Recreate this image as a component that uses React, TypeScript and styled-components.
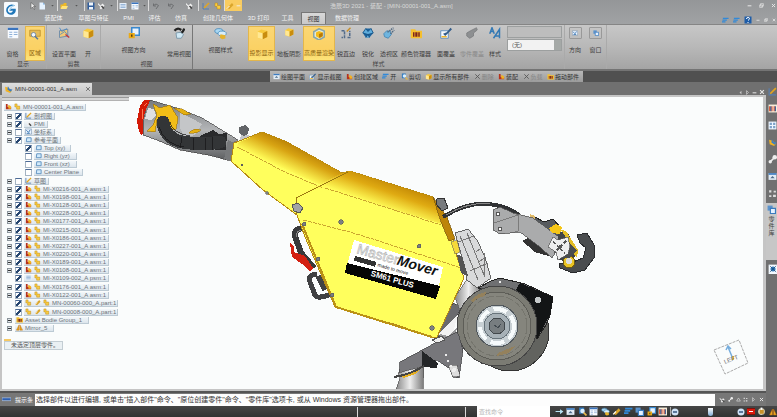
import React from 'react';
import styled, { createGlobalStyle, css } from 'styled-components';

const GlobalStyle = createGlobalStyle`
  * { box-sizing: border-box; }
  body { margin: 0; background: #707070; }
  body, button, input, select { font-family: "Liberation Sans", "Noto Sans CJK SC", sans-serif; font-size: 6px; line-height: 8px; }
  button { border: 0; padding: 0; margin: 0; background: none; color: inherit; white-space: nowrap; }
  svg { display: block; flex: none; }
`;

/* ---------- small icons ---------- */

type IconName =
  | 'cursor' | 'doc' | 'folder' | 'save' | 'tool' | 'list' | 'window' | 'undo' | 'help' | 'region'
  | 'planes' | 'box' | 'clouds' | 'boxRing' | 'edge' | 'sphere' | 'pipe' | 'palette' | 'brush'
  | 'brushOff' | 'font' | 'orient' | 'lock' | 'camera' | 'asm' | 'part' | 'sketch' | 'plane' | 'copy'
  | 'cut' | 'gear' | 'grid' | 'bone' | 'dots' | 'star' | 'arrow' | 'zoom' | 'pan' | 'flag' | 'restore'
  | 'close' | 'minus' | 'mirror' | 'lines' | 'books' | 'caret' | 'tri' | 'bar' | 'clock' | 'left' | 'right' | 'model';

const drawings: Record<IconName, React.ReactNode> = {
  cursor: <path d="M4 1v12l3-3 3 5 2-1-3-5h4z" fill="#eee" stroke="#444" />,
  doc: <><path d="M3 1h7l4 4v10H3z" fill="#e5f2ff" /><path d="M10 1v4h4" fill="#7fb3e6" /></>,
  folder: <><path d="M1 5h5l2-3h5v11H1z" fill="#eeb925" /><path d="M4 8h12l-3 6H1z" fill="#ffe37a" /></>,
  save: <><path d="M1 1h14v14H1z" fill="#315e9c" /><path d="M4 1h8v6H4zM4 10h8v5H4z" fill="#f0f5fa" /></>,
  tool: <><path d="M2 2l5 5 4-4 4 4-7 8-3-3 2-2-5-5z" fill="#f2f2f2" /><path d="M9 8l5 5" stroke="#444" strokeWidth="3" /></>,
  list: <><path d="M1 2h14v12H1z" fill="#e7f0fa" /><path d="M3 5h10M3 8h10M3 11h10" stroke="#4c80bb" /></>,
  window: <><path d="M1 1h14v14H1z" fill="#f8fbff" /><path d="M1 1h14v3H1z" fill="#3a74be" /><path d="M3 7h4M3 10h4M3 13h4M9 7h5M9 10h5" stroke="#6c98cb" /></>,
  undo: <path d="M3 7q5-6 10 0l-5 7M3 3v5h5" fill="none" stroke="#6c6e70" strokeWidth="2" />,
  help: <><path d="M1 1h14v14H1z" fill="#1e5da8" /><path d="M5 6q0-3 3-3t3 2q0 2-3 4M8 12v2" stroke="#fff" strokeWidth="2" fill="none" /></>,
  region: <><path d="M1 3h14v8H1z" fill="#e4bb58" stroke="#b98c28" /><circle cx="6" cy="9" r="3" fill="#eef7ff" stroke="#5a779b" /><path d="M8 11l4 4" stroke="#5a779b" strokeWidth="2" /></>,
  planes: <><path d="M2 5l11-2v9L2 14z" fill="#f1c978" stroke="#537ead" /><path d="M2 1l3 5 7-4M3 10l6-4 4 5" stroke="#3c83c5" fill="none" /><path d="M10 10l5 4" stroke="#c4373c" strokeWidth="2" /></>,
  box: <><path d="M2 5l5-3 8 2v8l-7 3-6-2z" fill="#f7c93c" /><path d="M2 5l7 2v8l-7-2z" fill="#ffe894" /><path d="M9 7l6-3v8l-6 3z" fill="#c98d0f" /></>,
  clouds: <><ellipse cx="6" cy="5" rx="5" ry="3" fill="#a9d7f2" stroke="#448abd" /><ellipse cx="10" cy="8" rx="5" ry="3" fill="#d8eefa" stroke="#448abd" /><path d="M8 9l6 1v4l-4 1-3-2z" fill="#e5b32d" /></>,
  boxRing: <><path d="M1 5l7-4 7 3v8l-7 4-7-4z" fill="#e4e9d5" stroke="#88a5a9" strokeWidth="2" /><path d="M4 6l4-2 5 2v5l-4 3-5-3z" fill="#f4bb18" /><path d="M8 8v5l5-2V6z" fill="#b87907" /></>,
  edge: <><path d="M2 5h4v9H2M10 14h3V5" fill="none" stroke="#526b89" strokeWidth="2" strokeDasharray="4 1" /><path d="M9 6l5-5" stroke="#c78e28" strokeWidth="2" /></>,
  sphere: <><path d="M1 8l4-6h7l3 6-5 6H5z" fill="#1b639e" /><path d="M1 8l4-6 3 4 4-4 3 6-7 2zM5 14l3-4 2 4" fill="#5eacdc" stroke="#124b7c" /></>,
  pipe: <><path d="M1 9l4-4 5 1 1 4-4 5-5-2z" fill="#6eb5df" stroke="#3d7fae" /><path d="M6 7l8-6M10 9l5-5" stroke="#536a80" strokeWidth="2" strokeDasharray="2 1" /></>,
  palette: <><path d="M1 3h6l1 2h8v10H1z" fill="#f5bf2e" /><path d="M4 7h2v6H4zM7 7h3v6H7zM11 7h2v6h-2z" fill="#7d251d" /></>,
  brush: <><path d="M1 5h10v10H1z" fill="#f6fafe" stroke="#477eb6" /><path d="M4 9l5-2 5-6 2 2-6 6-3 3z" fill="#315b89" /><path d="M2 12h7v2H2z" fill="#efb52a" /></>,
  brushOff: <path d="M1 8l5-3 8-4 1 3-5 4v4l-5 3-4-3z" fill="#8d8f91" stroke="#787a7c" />,
  font: <path d="M1 9L4 1l3 8M2 6h4M6 15l8-12v12M8 12h6" stroke="#3479b4" strokeWidth="2" fill="none" />,
  orient: <><path d="M1 2h14v12H1z" fill="#eaf4ff" stroke="#527398" /><path d="M3 5l5 5 4-6M4 12h7" stroke="#2c6bac" strokeWidth="2" fill="none" /></>,
  lock: <><path d="M5 1h10v10H5z" fill="#e8f3ff" stroke="#3988cd" strokeWidth="2" /><path d="M1 8h8v7H1z" fill="#eaaa17" /><path d="M4 10h2v3H4z" fill="#584010" /></>,
  camera: <><path d="M2 5q4-5 9-1M9 9q5-2 6-7" stroke="#222" strokeWidth="3" fill="none" /><path d="M4 8l6-1 4 3-3 5H5z" fill="#d1e9f5" stroke="#6a8ba0" /></>,
  asm: <><path d="M2 2h4v7h8v5H2z" fill="#b6321c" /><path d="M7 5h3l4 3v5H8z" fill="#f3b221" /></>,
  model: <><path d="M2 3l6 2 6 5-3 4-8-3z" fill="#f3b221" /><path d="M7 2l3 5 5 1-3 4-6-4z" fill="#3c7fc4" /></>,
  part: <path d="M2 2h5v5h6v7H6V9H2z" fill="#f9cd42" stroke="#b98412" />,
  sketch: <><path d="M2 2v12h12" stroke="#577fb1" strokeWidth="2" fill="none" /><path d="M4 12l10-10" stroke="#e4a51d" strokeWidth="3" /></>,
  plane: <path d="M4 4h10v9H3z" fill="#d2eafa" stroke="#578dbe" strokeWidth="2" />,
  copy: <><path d="M1 1h9v9H1z" fill="#5c93cc" /><path d="M6 6h9v9H6z" fill="#e4f1ff" stroke="#397abe" strokeWidth="2" /></>,
  cut: <path d="M3 3l10 10M13 3L3 13" stroke="#555" strokeWidth="2" />,
  gear: <><circle cx="8" cy="8" r="6" fill="#d7cfb4" /><path d="M5 5h7v7H5z" fill="#c79128" /><path d="M8 1v4" stroke="#fff" strokeWidth="3" /></>,
  grid: <><path d="M1 1h14v14H1z" fill="#eef6ff" /><path d="M3 3h4v4H3zM9 3h4v4H9zM3 9h4v4H3zM9 9h4v4H9z" fill="#7ea2c8" /></>,
  bone: <><path d="M4 12l8-8" stroke="#eee" strokeWidth="3" /><circle cx="12" cy="4" r="4" fill="#eee" /><circle cx="4" cy="12" r="3" fill="#eee" /></>,
  dots: <path d="M2 2h4v4H2zM10 3h4v3h-4zM2 11h4v3H2zM9 10h5v4H9z" fill="#ddd" />,
  star: <><path d="M1 1h15v15H1z" fill="#f4faff" /><circle cx="8" cy="8" r="4" fill="#2f75b5" /><path d="M3 3l10 10M13 3L3 13" stroke="#17456f" /></>,
  arrow: <path d="M1 7h8V4l6 4-6 5V9H1z" fill="#b7e4f5" />,
  zoom: <><path d="M2 1h9v11H2z" fill="#367dc1" /><circle cx="8" cy="7" r="4" fill="#d8efff" /><path d="M10 10l5 5" stroke="#e8b84b" strokeWidth="3" /></>,
  pan: <><path d="M1 2h14v12H1z" fill="#e2edf7" /><path d="M1 2h14v3H1z" fill="#3d7cc0" /><path d="M4 11l4-4 4 4" fill="#4e6d8b" /></>,
  flag: <><path d="M2 12L12 2l3 4-8 8z" fill="#dba62b" /><path d="M2 13l5-5" stroke="#fff" strokeWidth="2" /></>,
  restore: <path d="M5 2h9v8H5zM2 6h9v8H2z" fill="none" stroke="#e8e8e8" strokeWidth="2" />,
  close: <path d="M3 3l10 10M13 3L3 13" stroke="#e8e8e8" strokeWidth="3" />,
  minus: <path d="M2 9h12" stroke="#eee" strokeWidth="3" />,
  mirror: <path d="M7 2L1 14h6zM9 2l6 12H9z" fill="#eca91e" stroke="#bb6b12" />,
  lines: <path d="M2 3h13M1 7h10M0 11h8" stroke="#3289d8" strokeWidth="3" />,
  books: <><path d="M1 1h15v14H1z" fill="#f6edda" /><path d="M3 4v9M7 4v9M11 4v9" stroke="#d94e2b" strokeWidth="2" /><path d="M5 4v9M13 4v9" stroke="#2b4e8d" strokeWidth="2" /></>,
  caret: <path d="M4 6h8l-4 5z" fill="#555" />,
  tri: <path d="M8 3l6 10H2z" fill="none" stroke="#ddd" strokeWidth="2" />,
  bar: <path d="M0 5h16v5H0z" fill="#2f5fae" stroke="#c2d6f4" />,
  clock: <><circle cx="8" cy="8" r="7" fill="#cfe2f6" /><path d="M4 8h8" stroke="#34567f" strokeWidth="3" /></>,
  left: <path d="M11 2v12L5 8z" fill="#c8c8c8" />,
  right: <path d="M5 2v12l6-6z" fill="none" stroke="#ddd" strokeWidth="2" />,
};

const Icon = ({ name, size = 8 }: { name: IconName; size?: number }) => (
  <svg width={size} height={size} viewBox="0 0 16 16" aria-hidden="true">{drawings[name]}</svg>
);

/* ---------- layout parts ---------- */

const Page = styled.div`display: flex; flex-direction: column; min-height: 100vh; overflow: hidden;`;

const Header = styled.header`display: flex; height: 24px; background: linear-gradient(#949698, #a0a2a4); color: #f2f2f2;`;
const LogoBox = styled.div`width: 22px; padding: 2px 4px;`;
const HeaderBody = styled.div`display: flex; flex: 1; flex-direction: column; justify-content: space-between;`;
const TitleRow = styled.div`display: grid; grid-template-columns: 230px 1fr auto; height: 11px; align-items: center;`;
const QuickBar = styled.div`display: flex; align-items: center; padding-left: 6px; height: 11px;`;
const QuickButton = styled.button<{ $w: number; $hot?: boolean; $sep?: boolean }>`
  display: flex; align-items: center; justify-content: center; height: 11px; width: ${p => p.$w}px;
  background: ${p => (p.$hot ? '#f9cc60' : 'none')};
  border-left: ${p => (p.$sep ? '1px solid #dcdcdc' : '0')};
`;
const WindowTitle = styled.h1`margin: 0 0 0 78px; font-size: 6px; font-weight: 400; line-height: 10px; color: #d9d9d9; white-space: pre;`;
const IconRow = styled.div<{ $gap?: number }>`display: flex; align-items: center; gap: ${p => p.$gap ?? 4}px; padding-right: 1px;`;
const TabRow = styled.nav`display: flex; align-items: flex-end; height: 13px; padding-left: 15px;`;
const RibbonTab = styled.button<{ $w: number; $active?: boolean }>`
  width: ${p => p.$w}px; height: 12px; color: #f4f4f4;
  ${p => p.$active && css`background: linear-gradient(#d9d9d9, #c8c8c8); color: #333; border: 1px solid #777; border-bottom: 0; border-radius: 1px 1px 0 0;`}
`;
const Spring = styled.div`flex: 1;`;

const Ribbon = styled.section`display: flex; height: 47px; color: #444; background: linear-gradient(#c7c7c7, #b8b8b8 50%, #a4a4a4); border-top: 1px solid #858585; border-bottom: 2px solid #747474;`;
const Group = styled.div<{ $w: number; $strong?: boolean }>`
  display: flex; flex-direction: column; flex: none; width: ${p => p.$w}px;
  border-right: 1px solid ${p => (p.$strong ? '#777' : '#aaa')};
`;
const GroupButtons = styled.div`display: flex; height: 35px; padding-top: 1px;`;
const Caption = styled.div`text-align: center; line-height: 8px;`;
const RibbonButton = styled.button<{ $w: number; $hot?: boolean; $high?: boolean; $dim?: boolean }>`
  display: flex; flex: none; flex-direction: column; align-items: center; justify-content: space-between;
  width: ${p => p.$w}px; height: 35px; padding: ${p => (p.$high ? '1px 0 7px' : '1px 0 3px')};
  color: ${p => (p.$dim ? '#8a8a8a' : '#3c3c3c')};
  ${p => p.$hot && css`background: linear-gradient(#fbd774, #fbd163 70%, #fde47a); border: 1px solid #e3b64b; color: #8a6412;`}
`;
const IconFrame = styled.span<{ $on?: boolean }>`
  display: flex; align-items: center; justify-content: center;
  ${p => p.$on && css`width: 13px; height: 12px; border: 1px solid #999; border-radius: 1px;`}
`;
const Combos = styled.div`display: flex; flex-direction: column; gap: 1px; width: 57px; margin-left: auto;`;
const Combo = styled.select<{ $light?: boolean }>`
  appearance: none; width: 55px; height: 12px; padding: 0 4px; border: 1px solid #9c9f9f; border-radius: 0;
  color: #555; background: ${p => (p.$light ? 'linear-gradient(90deg, #f2f2f2 86%, #a5a9a7 86%)' : '#bdbdbd')};
`;

const ContextStrip = styled.div`display: flex; height: 11px; background: #505050; padding-left: 270px;`;
const ContextBar = styled.div`display: flex; align-items: center; height: 11px; width: 313px; justify-content: space-between; padding: 0 4px 0 3px; background: linear-gradient(#b7b7b7, #9c9c9c); color: #333;`;
const ContextButton = styled.button<{ $dim?: boolean }>`display: flex; align-items: center; gap: 1px; color: ${p => (p.$dim ? '#858585' : '#333')};`;

const Middle = styled.div`display: flex; flex: 1;`;
const Main = styled.main`display: flex; flex: 1; min-width: 0; flex-direction: column;`;
const DocTabs = styled.div`display: flex; align-items: flex-end; justify-content: space-between; height: 13px; background: #707070; padding-left: 2px;`;
const DocTab = styled.button`display: flex; align-items: center; gap: 2px; height: 12px; width: 90px; padding: 0 1px 0 2px; background: linear-gradient(#dedede, #c6c6c6); color: #333;`;
const DocName = styled.span`flex: 1; text-align: left;`;

const Viewport = styled.section`display: flex; flex: 1; position: relative; overflow: hidden; background: #fafcfc; border: 2px solid #c5c5c5; border-right-width: 3px;`;
const TreePane = styled.aside`width: 128px; flex: none;`;
const PaneHandle = styled.div`height: 4px; margin-bottom: 2px; width: 127px; background: #d4d4d4; border-top: 1px solid #999; border-bottom: 1px solid #b2b2b2;`;
const TreeGroup = styled.ul`list-style: none; margin: 0 0 1px; padding: 0 0 0 2px;`;
const TreeRow = styled.li<{ $indent: number }>`display: flex; align-items: center; height: 8px; padding-left: ${p => p.$indent}px;`;
const Expander = styled.button`
  flex: none; width: 5px; height: 5px; margin: 0 3px; background: #e4e9ec; border: 1px solid #8c959c;
  &::after { content: ""; display: block; width: 3px; height: 1px; background: #333; }
`;
const ExpanderGap = styled.span<{ $w: number }>`flex: none; width: ${p => p.$w}px;`;
const Tick = styled.input`
  appearance: none; flex: none; width: 7px; height: 7px; margin: 0 2px 0 0; border: 1px solid #a4b3c2; border-top-color: #4d6b96; background: #fff;
  &:checked { background: linear-gradient(135deg, #fff 35%, #25456f 36% 62%, #fff 63%); }
`;
const TreeLabel = styled.label<{ $w?: number }>`
  display: flex; align-items: center; gap: 2px; height: 7px; padding: 0 2px 0 1px; width: ${p => (p.$w ? p.$w + 'px' : 'auto')};
  white-space: nowrap; color: #6d747a; background: linear-gradient(#f3f7fa, #dce5ec); border-bottom: 1px solid #bccad4; border-right: 1px solid #bccad4;
`;
const HintBlock = styled.div`
  margin: 7px 0 0 2px;
  &::before { content: ""; display: block; width: 7px; height: 2px; background: #f6c964; }
`;
const Hint = styled.div`
  width: fit-content; height: 9px; padding: 0 3px 0 6px; line-height: 7px; color: #555;
  background: #eaf0f3; border: 1px solid #c3cdd3;
`;
const Drawing = styled.svg`display: block; width: 470px; height: 292px;`;
const CubeBox = styled.div`position: absolute; right: 14px; bottom: 14px;`;

const Status = styled.footer`display: flex; align-items: center; height: 15px; border-top: 2px solid #555; background: #777;`;
const StatusTitle = styled.label`display: flex; align-items: center; gap: 4px; width: 35px; padding-left: 2px; color: #fff;`;
const StatusField = styled.input`flex: 1; min-width: 0; height: 12px; padding: 0 1px; border: 0; background: #fdfdfd; color: #333; font-size: 7px; line-height: 12px;`;
const StatusTools = styled.div`display: flex; align-items: center; justify-content: space-between; width: 51px; padding: 0 2px 0 4px;`;

const SideBar = styled.aside`display: flex; flex: none; flex-direction: column; align-items: center; width: 11px; padding-top: 1px; background: #707070; overflow: hidden;`;
const SideButton = styled.button`display: flex; flex: none; align-items: center; justify-content: center; height: 17px; width: 11px; padding-left: 2px;`;
const SideTab = styled.button`
  display: flex; flex-direction: column; flex: none; align-items: center; gap: 2px; width: 11px; height: 57px; padding-top: 2px; margin: 1px 0 0;
  background: #c7c7c7; color: #444; white-space: normal; line-height: 7px;
`;
const VerticalText = styled.span`width: 6px;`;

const BottomBar = styled.div`display: flex; height: 11px; align-items: center; background: linear-gradient(#464646, #303332);`;
const BottomSegment = styled.div<{ $grow: number }>`flex: ${p => p.$grow} 1 0; height: 10px; border-right: 1px solid #d8d8d8;`;
const FindField = styled.input`width: 73px; height: 11px; margin-left: 11px; padding: 0 2px; border: 0; background: #fff; color: #999; &::placeholder { color: #b5b5b5; opacity: 1; }`;
const BottomTools = styled.div`display: flex; align-items: center; justify-content: space-between; width: 227px; padding-left: 5px;`;
const ToolButton = styled.button`display: flex;`;
const ZoomTrack = styled.div`display: flex; width: 75px; align-items: center; justify-content: space-between; border-left: 1px solid #aaa;`;
const Slider = styled.input`
  appearance: none; width: 56px; height: 9px; margin: 0; background: transparent;
  &::-webkit-slider-thumb { appearance: none; width: 5px; height: 8px; background: linear-gradient(#fff, #7facd4); border-radius: 0 0 3px 3px; }
`;
const Record = styled.span`display: block; width: 8px; height: 7px; background: #d9190c; border: 1px solid #7a120c; border-width: 1px 0;
  &::after { content: ""; display: block; margin: 2px auto; width: 4px; height: 1px; background: #fff; }
`;

/* ---------- data ---------- */

const quick: [IconName, number, boolean?, boolean?][] = [
  ['cursor', 9], ['doc', 10], ['caret', 10], ['folder', 12, false, true], ['caret', 15], ['save', 12, false, true], ['tool', 9], ['caret', 12],
  ['list', 11, false, true], ['window', 13], ['caret', 7], ['undo', 14, false, true], ['undo', 17], ['tool', 19], ['sketch', 14, false, true], ['part', 12], ['flag', 11, true, true], ['minus', 7, true],
];
const tabs: [string, number][] = [
  ['装配体', 33], ['草图与特征', 47], ['PMI', 23], ['评估', 29], ['仿真', 24], ['创建几何体', 50], ['3D 打印', 31], ['工具', 27], ['视图', 25], ['数据管理', 42],
];

type Row = { text: string; indent?: number; ticked?: boolean; open?: boolean; icons: IconName[]; w?: number; root?: boolean };
const asmRow = (n: string, suffix = '001_A asm:1'): Row => ({ text: `MI-X${n}-${suffix}`, ticked: true, open: true, icons: ['asm', 'part'], w: 85 });
const tree: Row[][] = [
  [{ text: 'MN-00001-001_A.asm', icons: ['asm', 'part'], root: true }],
  [
    { text: '剖视图', ticked: true, open: true, icons: ['sketch'] },
    { text: 'PMI', ticked: true, open: true, icons: ['tool'] },
    { text: '坐标系', ticked: false, open: true, icons: ['orient'] },
    { text: '参考平面', ticked: true, open: true, icons: ['plane'] },
    { text: 'Top (xy)', indent: 10, ticked: true, icons: ['plane'], w: 37 },
    { text: 'Right (yz)', indent: 10, ticked: false, icons: ['plane'], w: 43 },
    { text: 'Front (xz)', indent: 10, ticked: false, icons: ['plane'], w: 43 },
    { text: 'Center Plane', indent: 10, ticked: false, icons: ['plane'], w: 49 },
  ],
  [{ text: '草图', ticked: false, open: true, icons: ['sketch'] }, asmRow('0216'), asmRow('0198'), asmRow('0128'), asmRow('0228'), asmRow('0177')],
  [asmRow('0215'), asmRow('0186'), asmRow('0227'), asmRow('0220'), asmRow('0189'), asmRow('0108'),
    { text: 'MI-X0109-002_A psm:1', ticked: true, icons: ['list', 'part'], w: 85 }],
  [asmRow('0176'), asmRow('0122'), { text: 'MN-00060-000_A.part:1', ticked: true, icons: ['part', 'flag', 'part'], w: 94 }],
  [
    { text: 'MN-00008-000_A.part:1', ticked: true, icons: ['part', 'flag', 'part'], w: 94 },
    { text: 'Asset Bodie Group_1', open: true, icons: ['palette'], w: 74 },
    { text: 'Mirror_5', open: true, icons: ['mirror'], w: 39 },
  ],
];

const context: [IconName, string, boolean?][] = [
  ['pan', '绘图平面'], ['brush', '显示截图'], ['asm', '创建区域'], ['lines', '开'], ['zoom', '剪切'],
  ['box', '显示所有部件'], ['cut', '删除', true], ['asm', '装配'], ['cut', '负载', true], ['palette', '拖动部件'],
];

/* ---------- drawings ---------- */

const Logo = () => (
  <svg width="14" height="15" viewBox="0 0 42 45" role="img" aria-label="浩辰3D">
    <rect width="42" height="45" rx="4" fill="#f7fbff" />
    <path d="M33 10Q17 3 9 16c-7 12 2 25 15 22 9-2 13-11 11-18H21l-4 6h10c-2 7-13 9-15 1-3-10 10-17 21-17z" fill="#2178ba" />
    <path d="M33 10Q16 15 17 27" stroke="#65b1df" strokeWidth="2" fill="none" />
  </svg>
);

const Tug = () => (
  <Drawing viewBox="130 97 470 292" role="img" aria-label="MasterMover" shapeRendering="crispEdges">
    <defs>
      <linearGradient id="neck" gradientUnits="userSpaceOnUse" x1="300" y1="148" x2="289" y2="171">
        <stop offset="0" stopColor="#bd8507" /><stop offset=".35" stopColor="#d8a413" /><stop offset="1" stopColor="#fffb57" />
      </linearGradient>
      <linearGradient id="hood" gradientUnits="userSpaceOnUse" x1="392" y1="182" x2="383" y2="207">
        <stop offset="0" stopColor="#c58b06" /><stop offset=".4" stopColor="#dfaa12" /><stop offset="1" stopColor="#fffb57" />
      </linearGradient>
      <linearGradient id="steel"><stop offset="0" stopColor="#888" /><stop offset=".5" stopColor="#eee" /><stop offset="1" stopColor="#777" /></linearGradient>
      <linearGradient id="arm" x2="0" y2="1"><stop offset="0" stopColor="#777a7d" /><stop offset=".5" stopColor="#b4b6b8" /><stop offset="1" stopColor="#595b5d" /></linearGradient>
    </defs>

    {/* handle */}
    <path d="M150 100L180 109 202 118 230 135 238 140 234 143 231 161 208 155 180 150 157 140 143 135V122L146 108z" fill="url(#arm)" stroke="#444" strokeWidth=".7" />
    <path d="M148 108l6 1 2 7-5 4-6-1z" fill="#dfe0e3" />
    <path d="M180 112l22 12-7 11-10 2-5-9z" fill="#c4c6c8" />
    <path d="M200 136l13-6 6 4 8-1-1 17-22-1z" fill="#292a2c" />
    <path d="M153 104l7 4 10-3 8 13-2 11-7 2 1-9-7-6-6 4-2 12-8-1 6-6 4-10z" fill="#f2bd17" stroke="#a77b0b" strokeWidth=".7" />
    <path d="M174 108l8 1 9 5-7 1zM189 133q5-6 12-3-4 4-12 3z" fill="#e4af11" stroke="#926b0a" strokeWidth=".5" />
    <path d="M163 122c0 9 8 18 19 20 14 2 24 3 38 0" stroke="#333537" strokeWidth="13" fill="none" strokeLinecap="round" />
    <path d="M159 127c5 13 13 18 25 20M170 122c1 8 9 12 20 14M182 137l-2 11M194 138l-1 12M205 138v12M212 137v13" stroke="#151617" strokeWidth=".7" fill="none" />
    <path d="M232 142l6-2-7 21-7-2 4-19z" fill="#77797b" />
    <path d="M144 100h6l-5 12-2 10v12l-2 1-3-7-1-8 3-14z" fill="#d31b08" />
    <path d="M147 103l-3 3M142 109v10" stroke="#ff7750" />
    <path d="M242 134l7 1v4l-10 2z" fill="#c5c7c9" /><path d="M239 127l6-2 4 3-1 6-4 2-5-3z" fill="#626568" />

    {/* lifting gear left of the hood */}
    <path d="M304 228q-11 1-9 8l6 17 13 15" fill="none" stroke="#38393b" strokeWidth="6" />
    <path d="M301 230q-6 2-4 7" stroke="#888" fill="none" />
    <path d="M317 274q-10 1-7 8l5 13q2 5 19-2M318 276l7 14" fill="none" stroke="#404143" strokeWidth="5" />
    <path d="M290 243l4 4v5l11 4 8 12-3 4-8-8-10-7z" fill="#d32112" />

    {/* linkage behind the body */}
    <path d="M453 303l9 4-15 26-12 5 5-15z" fill="#6a6a6e" stroke="#333" strokeWidth=".7" />
    <path d="M450 322l8-7-6 20-10 3-3-4z" fill="#f2f2f2" /><path d="M440 334l8 2 9-8-3 13-17 3z" fill="#99999b" />
    <path d="M455 297l12-18 15 12-22 20z" fill="url(#steel)" stroke="#555" strokeWidth=".7" />

    {/* yellow body */}
    <path d="M234 143L262 132 287 142 342 173 350 171 433 197 453 238 457 257 464 278 437 337H431L397 325 372 318 335 307 305 237 297 215 263 190 231 161z" fill="#ffff5d" stroke="#b68a13" />
    <path d="M238 143L262 132 287 142 342 173 321 185 237 148z" fill="url(#neck)" />
    <path d="M342 173l8-2 83 26 9 27-119-36-20 5z" fill="url(#hood)" />
    <path d="M433 197l14 20 8 22-6 2-8-19z" fill="#bd8509" stroke="#7c580c" strokeWidth=".7" />
    <path d="M296 198l52-26M296 198l1 16" stroke="#9c7810" fill="none" />
    <path d="M237 147l48 25 38 16M325 188l116 37M303 220l47 12 32 10 79 26" stroke="#bd8e24" strokeWidth=".8" strokeDasharray="4 1" fill="none" />
    <path d="M302 224l34 83 96 30" stroke="#bb9115" strokeWidth="2" fill="none" />
    <path d="M292 205l6-2 5 5-3 5-6-2z" fill="#a2a4a6" stroke="#555" />
    <path d="M437 199l7-1 4 10-6 3-6-7z" fill="#777a7d" stroke="#333" />
    <g fill="#7c7f82" stroke="#555" strokeWidth=".6">
      <circle cx="341" cy="222" r="2.4" /><circle cx="419" cy="246" r="2" /><circle cx="304" cy="224" r="2" /><circle cx="318" cy="259" r="2" />
      <circle cx="332" cy="295" r="2" /><circle cx="432" cy="328" r="2.4" /><circle cx="267" cy="193" r="1.5" /><circle cx="242" cy="165" r="1" />
    </g>

    {/* name plate */}
    <path d="M354 240l89 27-7 32-91-26z" fill="#fff" /><path d="M347 263l93 23-4 13-91-26z" fill="#050505" />
    <g transform="translate(356 253) rotate(16)" fontFamily="Liberation Sans, sans-serif">
      <text fontSize="14" fill="#f4f4f4" stroke="#aaa" strokeWidth=".5">Master</text>
      <text x="42" fontSize="14" fontWeight="700" fontStyle="italic" fill="#111">Mover</text>
      <text x="24" y="7" fontSize="5" fill="#222">made to move</text>
      <path d="M0 3h22v5H0z" fill="#333" />
      <text x="20" y="18" fontSize="8" fontWeight="700" fill="#fff">SM61 PLUS</text>
    </g>

    {/* cable and drive unit */}
    <path d="M443 217q24-15 44-13 18 1 32 11" fill="none" stroke="#303234" strokeWidth="4" /><path d="M446 215q24-14 44-11" stroke="#888" fill="none" />
    <path d="M455 233l13-4 9 11 8 17 6 21-14 10-10-8-5-23z" fill="#d9dadb" stroke="#444" strokeWidth=".8" />
    <path d="M460 236l18 44M467 233l17 42M458 242l16-6M476 252l5-4M478 262l7-4M470 271l18-8M484 253v24" stroke="#777" fill="none" />
    <path d="M451 242l6-2 3 12-5 2z" fill="#f4d83a" stroke="#555" strokeWidth=".5" /><path d="M457 255l5 1 6 20-7-3z" fill="#555" />

    {/* front bracket and hook */}
    <path d="M522 241l6-3 15 10 6 8-15-4-6-6z" fill="#333" />
    <path d="M530 215l5 2 9 5 9-3 8 9-5 12-26-14z" fill="#565a5e" stroke="#222" /><path d="M530 214l5 2v8l-5-3z" fill="#e0bb68" />
    <path d="M493 210l7-3 13 6 20 5 30 22-11 18-12-11-20-15-20 2-7-4z" fill="#aaabac" stroke="#555" strokeWidth=".8" />
    <path d="M513 213l6 2-1 16-7 2M493 223l7-2 18-6" fill="none" stroke="#666" strokeWidth=".7" />
    <circle cx="498" cy="214" r="2" fill="#fff" stroke="#555" /><circle cx="500" cy="229" r="2" fill="#fff" stroke="#555" />
    <path d="M558 231l10 2 10 20-8 10-13-4z" fill="#414446" /><path d="M549 228l7-4 6 3-2 7-8-1z" fill="#f5c618" />
    <path d="M561 230l5 1 12 19-1 8-4-5-3-9z" fill="#e4bd24" />
    <path d="M577 235l10-2 7 12v13l-9 12-12 3-13-5-1-4 14-2 10-4 3-10-6-5z" fill="#4a4d4f" stroke="#292b2d" />
    <circle cx="569" cy="262" r="6" fill="#eac423" stroke="#715b12" /><circle cx="569" cy="261" r="3" fill="#ddd" />
    <path d="M556 258l14-14 7 6-8 8z" fill="#4a4d4f" />
    <path d="M548 247l5-10 5 3 10-3 2 9-2 8-10 6-2-8z" fill="#eee" stroke="#555" strokeWidth=".7" />
    <path d="M553 242l12 11M566 241l-12 12" stroke="#555" strokeWidth="1.5" strokeDasharray="3 2" /><circle cx="560" cy="247" r="2" fill="#555" />

    {/* wheels */}
    <ellipse cx="510" cy="332" rx="39" ry="39" fill="#62635f" stroke="#333" />
    <path d="M478 288l13-7 9-3 25 6 28 13-3 18-4 10-9 14-5-22-20-24z" fill="#6f7072" stroke="#222" />
    <path d="M520 283l33 14-3 18-5 9-8 15-4-22-18-26z" fill="#131516" /><circle cx="538" cy="300" r="3" fill="#c5c9ca" /><circle cx="500" cy="282" r="1.5" fill="#eee" />
    <circle cx="497" cy="326" r="40" fill="#7b7b73" stroke="#444" strokeWidth="1" />
    <circle cx="497" cy="326" r="34" fill="#85857d" stroke="#5d5d57" /><circle cx="497" cy="326" r="30" fill="none" stroke="#75756d" strokeDasharray="8 2" />
    <path d="M471 300q7-7 15-8l-1 4q-8 1-12 7zM498 353l17-7-6 7-12 3z" fill="#94815c" />
    <circle cx="497" cy="326" r="21" fill="#c8d0d4" stroke="#51585d" /><circle cx="497" cy="326" r="17" fill="none" stroke="#f7fbfc" strokeWidth="4" strokeDasharray="14 5" />
    <circle cx="497" cy="326" r="13" fill="#a7b1b7" stroke="#68747b" /><circle cx="497" cy="326" r="8" fill="#777d80" stroke="#42484c" />
    <path d="M494 325l4 3 3-4" stroke="#424a50" fill="none" />

    {/* swing plate and castor */}
    <path d="M457 332l-20 10-37 20-1 15 38-17 13 9 3 8 6 1 4-28-4-14z" fill="#77777b" stroke="#48484b" strokeWidth=".8" />
    <path d="M422 351l16 12-1 5-15-1z" fill="#242628" />
    <path d="M437 343l-5-3 10-4 3 4z" fill="#eee" stroke="#555" />
    <path d="M448 365l5 12 7-1-3-11z" fill="#ddd" stroke="#555" strokeWidth=".6" />
    <g fill="#eee"><circle cx="446" cy="355" r="1.5" /><circle cx="448" cy="361" r="1.5" /><circle cx="451" cy="366" r="1.5" /><circle cx="454" cy="370" r="2" /></g>
    <path d="M398 373l26-7-1 24h-27l4-12z" fill="url(#steel)" stroke="#555" strokeWidth=".7" />
    <path d="M401 375l19-6-5 5-12 4z" fill="#e4ae21" /><path d="M394 377q15-2 30-11" stroke="#444" strokeWidth="2" fill="none" />
  </Drawing>
);

const Cube = () => (
  <svg width="36" height="36" viewBox="0 0 36 36" role="img" aria-label="LEFT">
    <path d="M1 11L26 1 35 24 12 35z" fill="none" stroke="#aaa" strokeDasharray="3 1" />
    <path d="M15 8l5 12M13 11l2-4 3 3" stroke="#76addd" strokeWidth="1.5" fill="none" /><path d="M20 17v4" stroke="#ddb04c" strokeWidth="2" />
    <text transform="translate(12 25) rotate(-22)" fontFamily="Liberation Sans, sans-serif" fontSize="6" fill="#666">LEFT</text>
  </svg>
);

/* ---------- composed pieces ---------- */

type ToolProps = { icon: IconName; text: string; w: number; hot?: boolean; high?: boolean; dim?: boolean; framed?: boolean; size?: number };
const Tool = ({ icon, text, w, hot, high, dim, framed, size = 12 }: ToolProps) => (
  <RibbonButton $w={w} $hot={hot} $high={high} $dim={dim}>
    <IconFrame $on={framed}><Icon name={icon} size={size} /></IconFrame><span>{text}</span>
  </RibbonButton>
);

const TreeItem = ({ row, id }: { row: Row; id: string }) => (
  <TreeRow $indent={row.indent ?? 0}>
    {!row.root && (row.open ? <Expander aria-label="展开" /> : <ExpanderGap $w={11} />)}
    {!row.root && row.ticked !== undefined && <Tick type="checkbox" id={id} defaultChecked={row.ticked} />}
    <TreeLabel htmlFor={row.ticked !== undefined ? id : undefined} $w={row.w}>
      {row.icons.map((name, i) => <Icon key={i} name={name} size={7} />)}{row.text}
    </TreeLabel>
  </TreeRow>
);

export default function App() {
  return (
    <Page>
      <GlobalStyle />
      <Header>
        <LogoBox><Logo /></LogoBox>
        <HeaderBody>
          <TitleRow>
            <QuickBar>
              {quick.map(([name, w, hot, sep], i) => (
                <QuickButton key={i} $w={w} $hot={hot} $sep={sep} aria-label={name}><Icon name={name} size={name === 'caret' || name === 'minus' ? 5 : 8} /></QuickButton>
              ))}
            </QuickBar>
            <WindowTitle>浩辰3D 2021 - 装配 - [MIN-00001-001_A.asm]</WindowTitle>
            <IconRow $gap={7}><Icon name="minus" size={5} /><Icon name="restore" size={5} /><Icon name="close" size={5} /></IconRow>
          </TitleRow>
          <TabRow>
            {tabs.map(([text, w]) => <RibbonTab key={text} $w={w} $active={text === '视图'}>{text}</RibbonTab>)}
            <Spring />
            <IconRow $gap={4}>
              <Icon name="lines" size={7} /><Icon name="lines" size={7} /><Icon name="help" size={8} /><Icon name="minus" size={4} /><Icon name="restore" size={4} /><Icon name="close" size={4} />
            </IconRow>
          </TabRow>
        </HeaderBody>
      </Header>

      <Ribbon>
        <Group $w={47}>
          <GroupButtons><Tool icon="window" text="窗格" w={25} /><Tool icon="region" text="区域" w={20} hot /></GroupButtons>
          <Caption>显示</Caption>
        </Group>
        <Group $w={54}>
          <GroupButtons><Tool icon="planes" text="设置平面" w={34} /><Tool icon="box" text="开" w={14} /></GroupButtons>
          <Caption>剪裁</Caption>
        </Group>
        <Group $w={92} $strong>
          <GroupButtons><Tool icon="lock" text="视图方向" w={65} high /><Tool icon="camera" text="常用视图" w={26} /></GroupButtons>
          <Caption>视图</Caption>
        </Group>
        <Group $w={372}>
          <GroupButtons>
            <Tool icon="clouds" text="视图样式" w={55} high size={13} />
            <Tool icon="box" text="投影显示" w={27} hot /><Tool icon="box" text="地板阴影" w={28} size={10} />
            <Tool icon="boxRing" text="高质量渲染" w={32} hot /><Tool icon="edge" text="锐直边" w={22} /><Tool icon="sphere" text="锐化" w={22} />
            <Tool icon="pipe" text="透视区" w={20} /><Tool icon="palette" text="颜色管理器" w={34} /><Tool icon="brush" text="面覆盖" w={26} />
            <Tool icon="brushOff" text="零件覆盖" w={26} dim /><Tool icon="font" text="样式" w={20} />
            <Combos>
              <Combo aria-label="样式名称" defaultValue=""><option value=""></option></Combo>
              <Combo aria-label="面样式" $light><option>(无)</option></Combo>
            </Combos>
          </GroupButtons>
          <Caption>样式</Caption>
        </Group>
        <Group $w={42}>
          <GroupButtons><Tool icon="orient" text="方向" w={20} high framed size={6} /><Tool icon="copy" text="窗口" w={21} high framed size={6} /></GroupButtons>
        </Group>
      </Ribbon>

      <ContextStrip>
        <ContextBar>
          {context.map(([name, text, dim]) => <ContextButton key={text} $dim={dim}><Icon name={name} size={7} />{text}</ContextButton>)}
        </ContextBar>
      </ContextStrip>

      <Middle>
        <Main>
          <DocTabs>
            <DocTab><Icon name="model" size={9} /><DocName>MIN-00001-001_A.asm</DocName><Icon name="cut" size={6} /></DocTab>
            <IconRow $gap={2}><Icon name="left" size={5} /><Icon name="right" size={5} /><Icon name="minus" size={5} /><Icon name="close" size={6} /></IconRow>
          </DocTabs>
          <Viewport>
            <TreePane>
              <PaneHandle />
              {tree.map((rows, g) => (
                <TreeGroup key={g}>{rows.map((row, i) => <TreeItem key={i} row={row} id={`node-${g}-${i}`} />)}</TreeGroup>
              ))}
              <HintBlock><Hint>未选定顶层零件。</Hint></HintBlock>
            </TreePane>
            <Tug />
            <CubeBox><Cube /></CubeBox>
          </Viewport>
          <Status>
            <StatusTitle htmlFor="prompt"><Icon name="bar" size={9} />提示条</StatusTitle>
            <StatusField id="prompt" readOnly value={'选择部件以进行编辑, 或单击"插入部件"命令、"原位创建零件"命令、"零件库"选项卡, 或从 Windows 资源管理器拖出部件。'} />
            <StatusTools>
              <Icon name="tool" size={6} /><Icon name="bone" size={5} /><Icon name="tri" size={5} /><Icon name="dots" size={5} /><Icon name="right" size={5} /><Icon name="close" size={5} />
            </StatusTools>
          </Status>
        </Main>
        <SideBar>
          {(['sketch', 'books', 'grid', 'model', 'bone', 'pan', 'dots'] as IconName[]).map(name => (
            <SideButton key={name} aria-label={name}><Icon name={name} size={9} /></SideButton>
          ))}
          <SideTab><Icon name="copy" size={9} /><VerticalText>零件库</VerticalText></SideTab>
          <SideButton aria-label="star"><Icon name="star" size={10} /></SideButton>
        </SideBar>
      </Middle>

      <BottomBar>
        <BottomSegment $grow={359} /><BottomSegment $grow={108} />
        <FindField aria-label="查找命令" placeholder="查找命令" />
        <BottomTools>
          {(['arrow', 'pan', 'zoom', 'window', 'clouds', 'flag', 'lines', 'copy', 'lock', 'books'] as IconName[]).map((name, i) => (
            <ToolButton key={i} aria-label={name}><Icon name={name} size={9} /></ToolButton>
          ))}
          <ZoomTrack><Icon name="clock" size={8} /><Slider type="range" aria-label="缩放" defaultValue={55} /><Icon name="clock" size={8} /></ZoomTrack>
          <ToolButton aria-label="录制"><Record /></ToolButton>
          <ToolButton aria-label="gear"><Icon name="gear" size={9} /></ToolButton>
          <ToolButton aria-label="part"><Icon name="mirror" size={8} /></ToolButton>
        </BottomTools>
      </BottomBar>
    </Page>
  );
}
